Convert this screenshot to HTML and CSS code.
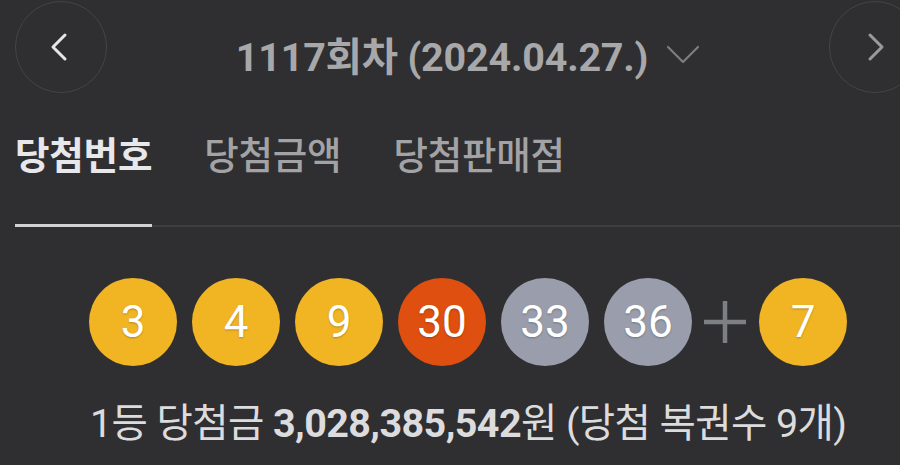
FILE: index.html
```html
<!DOCTYPE html>
<html lang="ko">
<head>
<meta charset="utf-8">
<link rel="stylesheet" href="styles.css">
</head>
<body>
<div class="page">
  <header class="top">
    <button class="nav-btn prev" aria-label="이전">
      <svg width="20" height="30" viewBox="0 0 20 30"><path d="M16 3 L4 15 L16 27" fill="none" stroke="#e6e6e6" stroke-width="3" stroke-linecap="round" stroke-linejoin="round"/></svg>
    </button>
    <div class="title">
      <span class="round">1117회차 (2024.04.27.)</span>
      <svg class="caret" width="34" height="20" viewBox="0 0 34 20"><path d="M2 2 L17 17 L32 2" fill="none" stroke="#7d7d7f" stroke-width="2.2" stroke-linecap="round" stroke-linejoin="round"/></svg>
    </div>
    <button class="nav-btn next" aria-label="다음">
      <svg width="20" height="30" viewBox="0 0 20 30"><path d="M4 3 L16 15 L4 27" fill="none" stroke="#9a9a9c" stroke-width="3" stroke-linecap="round" stroke-linejoin="round"/></svg>
    </button>
  </header>

  <nav class="tabs">
    <div class="tab active">당첨번호</div>
    <div class="tab">당첨금액</div>
    <div class="tab">당첨판매점</div>
  </nav>

  <section class="balls">
    <div class="ball yellow">3</div>
    <div class="ball yellow">4</div>
    <div class="ball yellow">9</div>
    <div class="ball orange">30</div>
    <div class="ball gray">33</div>
    <div class="ball gray">36</div>
    <div class="plus">
      <svg width="42" height="42" viewBox="0 0 42 42"><path d="M0 21 H42 M21 0 V42" stroke="#7e7f83" stroke-width="4.5"/></svg>
    </div>
    <div class="ball yellow">7</div>
  </section>

  <p class="prize">1등 당첨금 <b>3,028,385,542</b>원 (당첨 복권수 9개)</p>
</div>
</body>
</html>
```

FILE: styles.css
```css
html, body {
  margin: 0;
  padding: 0;
  background: #2f2f31;
  overflow: hidden;
}
.page {
  width: 900px;
  height: 465px;
  overflow: hidden;
  font-family: Roboto, "Noto Sans CJK KR", sans-serif;
}
.top {
  display: flex;
  align-items: flex-start;
  justify-content: space-between;
  padding: 1px 0 0 15px;
  margin-right: -21px;
  height: 92px;
}
.nav-btn {
  width: 92px;
  height: 92px;
  box-sizing: border-box;
  border: 1.5px solid #444446;
  border-radius: 50%;
  background: transparent;
  display: flex;
  align-items: center;
  justify-content: center;
  padding: 0;
}
.nav-btn.prev svg { margin-right: 4px; }
.nav-btn.next svg { margin-left: 2px; }
.title {
  display: flex;
  align-items: center;
  gap: 18px;
  height: 92px;
  padding-top: 12px;
  box-sizing: border-box;
}
.round {
  color: #a8a8aa;
  font-size: 39.5px;
  font-weight: 700;
  letter-spacing: -0.2px;
}
.caret { margin-top: 4px; }

.tabs {
  display: flex;
  gap: 52px;
  margin: 33px 0 0 15px;
  border-bottom: 2px solid #3e3e40;
}
.tab {
  position: relative;
  font-family: "Noto Sans CJK KR", sans-serif;
  font-size: 37.5px;
  color: #a3a3a5;
  font-weight: 500;
  line-height: 54px;
  padding-bottom: 45px;
  letter-spacing: -0.2px;
}
.tab.active {
  color: #e8e8ea;
  font-weight: 700;
}
.tab.active::after {
  content: "";
  position: absolute;
  left: 0;
  right: 0;
  bottom: -2px;
  height: 3.5px;
  background: #d2d2d4;
}

.balls {
  display: flex;
  align-items: center;
  gap: 15px;
  padding-left: 89px;
  margin-top: 51px;
}
.ball {
  width: 88px;
  height: 88px;
  border-radius: 50%;
  display: flex;
  align-items: center;
  justify-content: center;
  color: #fff;
  font-size: 44px;
  font-weight: 400;
  text-shadow: 0 1px 2px rgba(0,0,0,0.25);
}
.yellow { background: #f1b524; }
.orange { background: #df4f0f; }
.gray { background: #9a9dab; }
.plus {
  display: flex;
  align-items: center;
  margin: 0 -2px 0 -3px;
  height: 42px;
}

.prize {
  margin: 25px 0 0 90px;
  color: #dcdcde;
  font-size: 39.5px;
  letter-spacing: -0.6px;
  white-space: nowrap;
}
.prize b { font-weight: 700; }
```
